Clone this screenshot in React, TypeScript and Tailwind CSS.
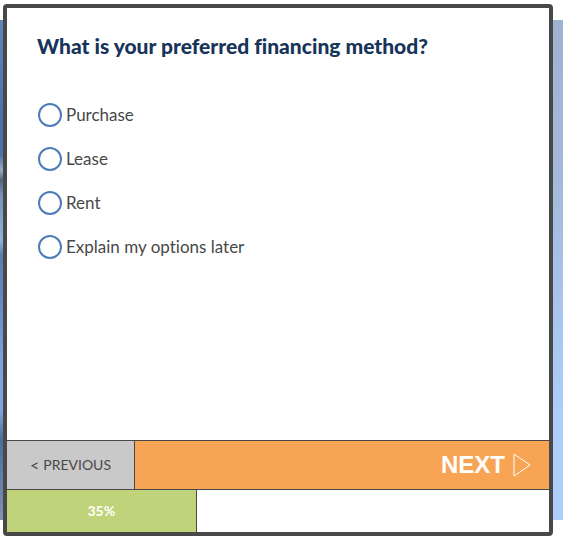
import { useState } from "react";

const OPTIONS = ["Purchase", "Lease", "Rent", "Explain my options later"];
const PROGRESS = 35;

function Backdrop() {
  return (
    <div aria-hidden="true" className="col-start-1 row-start-1 mt-4 mb-4 -ml-[3px] -mr-[10px] flex">
      <div className="w-1/2 bg-[linear-gradient(180deg,#5f86b8_0%,#4a72a8_20%,#4a72a8_27%,#9aacc0_30%,#52657c_32%,#7593b8_35%,#93b1d6_44%,#5b7eaf_47%,#6288bd_55%,#7ba3dc_68%,#7fa5da_78%,#4a6d9c_84%,#5c7ca6_90%,#8194ae_100%)]" />
      <div className="w-1/2 bg-[linear-gradient(180deg,#9fb3d0_0%,#a3b9da_30%,#a9c6ee_60%,#aecdf8_80%,#aecdf8_100%)]" />
    </div>
  );
}

export default function App() {
  const [choice, setChoice] = useState<string | null>(null);

  return (
    <main className="grid min-h-screen overflow-hidden bg-white pt-1 pr-[10px] pb-[5px] pl-[3px] font-['Lato',sans-serif] text-[#484848] [font-variant-ligatures:none]">
      <Backdrop />
      <form
        className="relative col-start-1 row-start-1 flex flex-col overflow-hidden rounded-[4px] border-4 border-[#484848] bg-white"
        onSubmit={(e) => e.preventDefault()}
      >
        <fieldset className="grow px-[30px] pt-6">
          <legend className="contents">
            <span className="block text-[21px] leading-7 font-black text-[#17345a]">
              What is your preferred financing method?
            </span>
          </legend>
          <div className="mt-[33px] flex flex-col items-start">
            {OPTIONS.map((option) => (
              <label key={option} className="flex h-11 cursor-pointer items-center gap-1 pl-px text-[17px]">
                <input
                  type="radio"
                  name="financing"
                  value={option}
                  checked={choice === option}
                  onChange={() => setChoice(option)}
                  className="size-6 appearance-none rounded-full border-2 border-[#4c7db8] bg-white checked:bg-[#4c7db8] checked:shadow-[inset_0_0_0_4px_white]"
                />
                {option}
              </label>
            ))}
          </div>
        </fieldset>

        <div className="flex h-[50px] border-y border-[#484848]">
          <button
            type="button"
            className="flex w-32 items-center justify-center gap-1 border-r border-[#484848] bg-[#c9c9c9] text-sm"
          >
            <span className="text-base">&lt;</span>
            PREVIOUS
          </button>
          <button
            type="submit"
            className="flex grow items-center justify-end gap-2 bg-[#f8a455] pr-[18px] font-['Liberation_Sans',sans-serif] text-2xl font-bold text-white"
          >
            NEXT
            <svg width="18" height="24" viewBox="0 0 18 24" fill="none" stroke="currentColor" aria-hidden="true">
              <path d="M1 1v22l16-11z" />
            </svg>
          </button>
        </div>

        <div
          role="progressbar"
          aria-label="Survey progress"
          aria-valuenow={PROGRESS}
          aria-valuemin={0}
          aria-valuemax={100}
          className="h-[42px]"
        >
          <div
            className="flex h-full items-center justify-center border-r border-[#484848] bg-[#bfd37a] text-sm font-bold text-white"
            style={{ width: `${PROGRESS}%` }}
          >
            {PROGRESS}%
          </div>
        </div>
      </form>
    </main>
  );
}
